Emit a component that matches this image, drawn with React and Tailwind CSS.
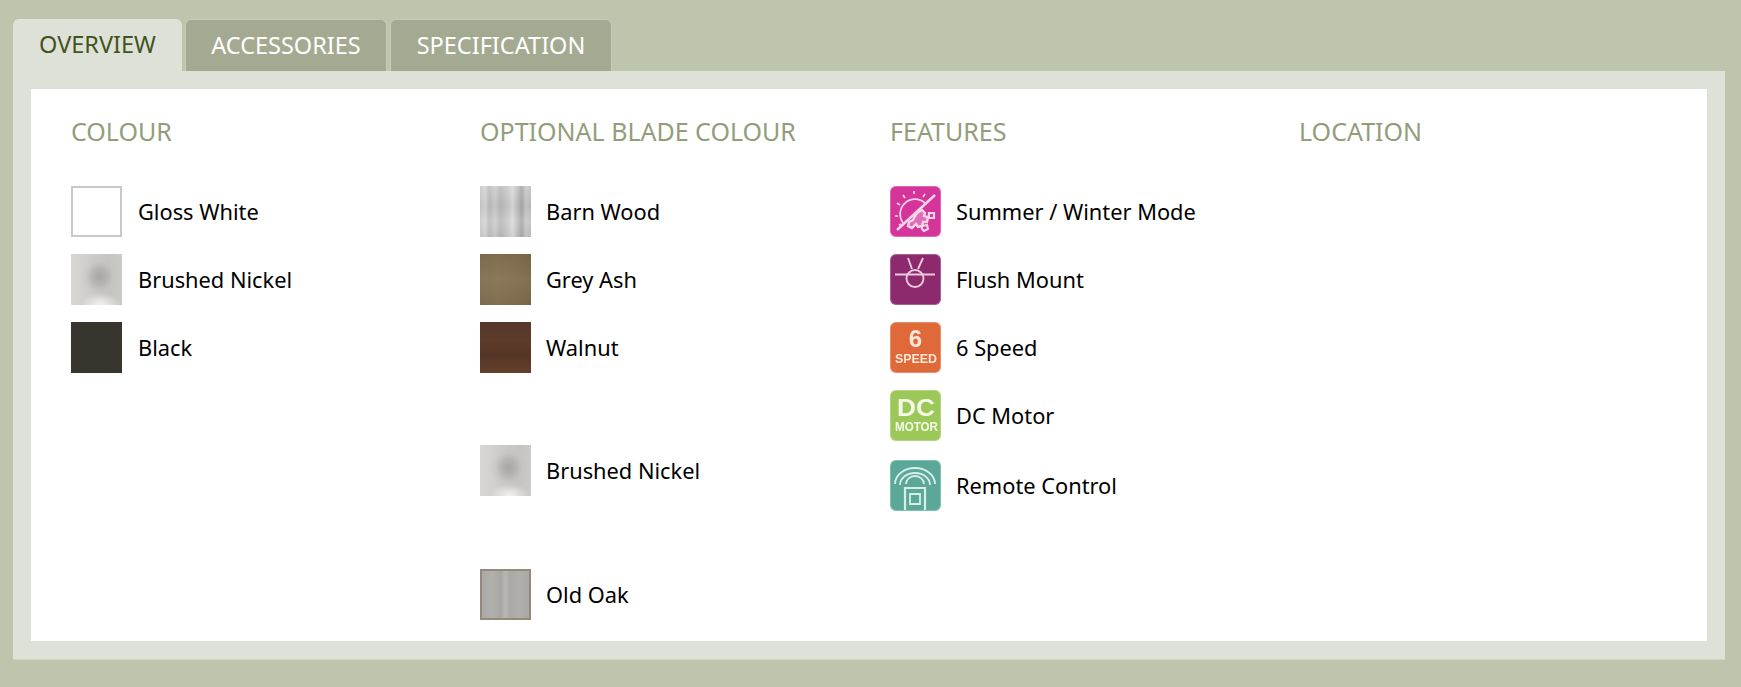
const nickel = 'bg-[radial-gradient(ellipse_38%_42%_at_56%_44%,#a9a7a3_0%,rgba(176,174,170,0.8)_35%,rgba(195,193,189,0.35)_70%,rgba(205,203,199,0)_100%),radial-gradient(ellipse_40%_24%_at_58%_100%,#f3f2ef_0%,rgba(238,237,234,0.65)_45%,rgba(225,224,221,0)_100%),linear-gradient(90deg,#d9d7d3,#d0cecA_35%,#c5c4c0_75%,#cbcac6)]';

const colours = [
  { name: 'Gloss White', cls: 'bg-white border-2 border-[#c9c9c9]' },
  { name: 'Brushed Nickel', cls: nickel },
  { name: 'Black', cls: 'bg-[#38352f]' },
];

const blades = [
  { name: 'Barn Wood', cls: 'bg-[linear-gradient(180deg,rgba(255,255,255,0.12),rgba(0,0,0,0.04)_40%,rgba(255,255,255,0.1)_70%,rgba(0,0,0,0.03)),linear-gradient(90deg,#c8c8c8_0%,#d6d6d6_10%,#bcbcbc_18%,#cdcdcd_30%,#b9b9b9_40%,#c6c6c6_52%,#dadada_64%,#c4c4c4_72%,#a8a8a8_82%,#c9c9c9_90%,#bfbfbf_100%)]', mb: 'mb-[17px]' },
  { name: 'Grey Ash', cls: 'bg-[linear-gradient(180deg,rgba(0,0,0,0.05),rgba(255,255,255,0.04)_50%,rgba(0,0,0,0.04)),linear-gradient(90deg,#83704f,#877253_35%,#85704f_60%,#7d6a4b)]', mb: 'mb-[17px]' },
  { name: 'Walnut', cls: 'bg-[linear-gradient(180deg,#55362a_0%,#5d3c2a_35%,#553525_65%,#63402c_100%)]', mb: 'mb-[72px]' },
  { name: 'Brushed Nickel', cls: nickel, mb: 'mb-[73px]' },
  { name: 'Old Oak', cls: 'border-2 border-[#94897a] bg-[linear-gradient(90deg,#aaa9a5,#b1b0ac_22%,#a7a6a2_40%,#b8b7b3_50%,#a9a8a4_60%,#b0afab_78%,#a9a8a4)]', mb: '' },
];

function SunIcon() {
  return (
    <svg viewBox="0 0 51 51" className="w-full h-full" fill="none" stroke="#f9d5ea" strokeWidth="1.7">
      <path d="M14 38a14 14 0 0 1 22-20" />
      <path d="M7 44 45 9" strokeWidth="2.4" />
      <path d="M7 17l3 2M13 9l2 3M24 5v3M35 8l-2 3M5 30h3M9 39l2-1" />
      <path d="M27 27l5-3 3 3-1 3 4 1-1 5-4 0-1 4-4 1-2-3-4 4-4-2 1-4 4-2 2-4z" strokeWidth="2.4" fill="#f9d5ea" fillOpacity="0.35" />
      <path d="M39 27h5v5h-5zM32 40l5-1 1 4-4 2-2-2z" strokeWidth="2.2" />
    </svg>
  );
}

function FlushIcon() {
  return (
    <svg viewBox="0 0 51 51" className="w-full h-full" fill="none" stroke="#e9c9dc" strokeWidth="1.9">
      <circle cx="25" cy="24.5" r="8.5" />
      <path d="M5 20.5h40" />
      <path d="M18 4l4 11M33 4l-5 11" />
    </svg>
  );
}

function SpeedIcon() {
  return (
    <svg viewBox="0 0 51 51" className="w-full h-full" fill="#fbe6da" fontFamily="'Liberation Sans', sans-serif" fontWeight="700" textAnchor="middle">
      <text x="25.5" y="25" fontSize="24">6</text>
      <text x="26" y="41" fontSize="13.5" textLength="42" lengthAdjust="spacingAndGlyphs">SPEED</text>
    </svg>
  );
}

function MotorIcon() {
  return (
    <svg viewBox="0 0 51 51" className="w-full h-full" fill="#f5fae6" fontFamily="'Liberation Sans', sans-serif" fontWeight="700" textAnchor="middle">
      <text x="26" y="26" fontSize="23" textLength="38" lengthAdjust="spacingAndGlyphs">DC</text>
      <text x="26.5" y="41" fontSize="12.5" textLength="43" lengthAdjust="spacingAndGlyphs">MOTOR</text>
    </svg>
  );
}

function RemoteIcon() {
  return (
    <svg viewBox="0 0 51 51" className="w-full h-full" fill="none" stroke="#d8eee9" strokeWidth="1.8">
      <path d="M5 24a20 16 0 0 1 40 0" />
      <path d="M10 25a15 12 0 0 1 30 0" />
      <path d="M16 24a9 8 0 0 1 18 0" />
      <path d="M15 50V28h20v22" strokeWidth="2.2" />
      <path d="M20 34h10v10H20z" />
    </svg>
  );
}

const features = [
  { name: 'Summer / Winter Mode', bg: 'bg-[#d5359a]', Icon: SunIcon, mb: 'mb-[17px]' },
  { name: 'Flush Mount', bg: 'bg-[#8d2a6d]', Icon: FlushIcon, mb: 'mb-[17px]' },
  { name: '6 Speed', bg: 'bg-[#e0693a]', Icon: SpeedIcon, mb: 'mb-[17px]' },
  { name: 'DC Motor', bg: 'bg-[#9bc858]', Icon: MotorIcon, mb: 'mb-[19px]' },
  { name: 'Remote Control', bg: 'bg-[#5ba898]', Icon: RemoteIcon, mb: '' },
];

function Heading({ children }) {
  return <h3 className="text-[25px] leading-[34px] text-[#929d7a] mb-[38px]">{children}</h3>;
}

function Row({ name, className = 'gap-[15px]', children }) {
  return (
    <div className={`flex items-center ${className}`}>
      {children}
      <span className="text-[21.8px] text-black pt-0.5">{name}</span>
    </div>
  );
}

export default function App() {
  return (
    <div className="h-[687px] bg-[#bec5ad] pt-[19px] pl-[13px] pr-4 font-['Noto_Sans','Open_Sans',sans-serif] overflow-hidden">
      {/* TABS */}
      <div className="flex gap-[3px] h-[52px]">
        <div className="w-[169px] rounded-t-md bg-[#dee1d8] text-[#41541c] text-[23.5px] flex items-center justify-center">OVERVIEW</div>
        <div className="w-[202px] rounded-t-md bg-[#a4aa92] border border-b-0 border-[#c6cabb] text-white text-[23.5px] flex items-center justify-center">ACCESSORIES</div>
        <div className="w-[222px] rounded-t-md bg-[#a4aa92] border border-b-0 border-[#c6cabb] text-white text-[23.5px] flex items-center justify-center">SPECIFICATION</div>
      </div>

      {/* PANEL */}
      <div className="bg-[#dee1d8] p-[18px] border-b border-[#d2d6c8]">
        <div className="bg-white h-[552px] pl-10 pt-[25px] grid grid-cols-[409px_410px_409px_1fr] content-start">
          <div>
            <Heading>COLOUR</Heading>
            {colours.map(c => (
              <Row key={c.name} name={c.name} className="gap-4 mb-[17px]">
                <div className={`w-[51px] h-[51px] shrink-0 ${c.cls}`}></div>
              </Row>
            ))}
          </div>
          <div>
            <Heading>OPTIONAL BLADE COLOUR</Heading>
            {blades.map(b => (
              <Row key={b.name} name={b.name} className={`gap-[15px] ${b.mb}`}>
                <div className={`w-[51px] h-[51px] shrink-0 ${b.cls}`}></div>
              </Row>
            ))}
          </div>
          <div>
            <Heading>FEATURES</Heading>
            {features.map(f => (
              <Row key={f.name} name={f.name} className={`gap-[15px] ${f.mb}`}>
                <div className={`w-[51px] h-[51px] shrink-0 rounded-md blur-[0.4px] shadow-[inset_0_0_0_1px_rgba(255,255,255,0.25)] ${f.bg}`}><f.Icon /></div>
              </Row>
            ))}
          </div>
          <div>
            <Heading>LOCATION</Heading>
          </div>
        </div>
      </div>
    </div>
  );
}
